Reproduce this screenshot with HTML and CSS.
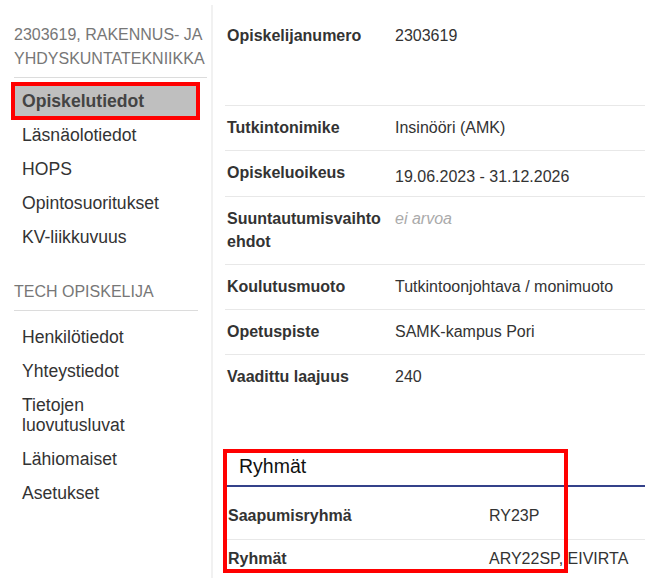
FILE: index.html
```html
<!DOCTYPE html>
<html lang="fi">
<head>
<meta charset="utf-8">
<title>Opiskelutiedot</title>
<link rel="stylesheet" href="styles.css">
</head>
<body>
<div class="layout">
  <aside class="sidebar">
    <div class="side-title">2303619, RAKENNUS- JA YHDYSKUNTATEKNIIKKA</div>
    <ul class="nav">
      <li><a class="nav-link active" href="#">Opiskelutiedot</a></li>
      <li><a class="nav-link" href="#">Läsnäolotiedot</a></li>
      <li><a class="nav-link" href="#">HOPS</a></li>
      <li><a class="nav-link" href="#">Opintosuoritukset</a></li>
      <li><a class="nav-link" href="#">KV-liikkuvuus</a></li>
    </ul>
    <div class="side-title second">TECH OPISKELIJA</div>
    <ul class="nav nav-second">
      <li><a class="nav-link" href="#">Henkilötiedot</a></li>
      <li><a class="nav-link" href="#">Yhteystiedot</a></li>
      <li><a class="nav-link" href="#">Tietojen luovutusluvat</a></li>
      <li><a class="nav-link" href="#">Lähiomaiset</a></li>
      <li><a class="nav-link" href="#">Asetukset</a></li>
    </ul>
  </aside>
  <main class="content">
    <div class="info">
      <div class="row first"><div class="label">Opiskelijanumero</div><div class="value">2303619</div></div>
      <div class="row"><div class="label">Tutkintonimike</div><div class="value">Insinööri (AMK)</div></div>
      <div class="row"><div class="label">Opiskeluoikeus</div><div class="value date">19.06.2023 - 31.12.2026</div></div>
      <div class="row"><div class="label">Suuntautumisvaihtoehdot</div><div class="value empty">ei arvoa</div></div>
      <div class="row"><div class="label">Koulutusmuoto</div><div class="value">Tutkintoonjohtava / monimuoto</div></div>
      <div class="row"><div class="label">Opetuspiste</div><div class="value">SAMK-kampus Pori</div></div>
      <div class="row"><div class="label">Vaadittu laajuus</div><div class="value">240</div></div>
    </div>
    <section class="groups">
      <h2 class="groups-title">Ryhmät</h2>
      <div class="grow first"><div class="glabel">Saapumisryhmä</div><div class="gvalue">RY23P</div></div>
      <div class="grow"><div class="glabel">Ryhmät</div><div class="gvalue">ARY22SP, EIVIRTA</div></div>
      <div class="annot"></div>
    </section>
  </main>
</div>
</body>
</html>
```
FILE: styles.css
```css
html, body {
  margin: 0;
  padding: 0;
  background: #fff;
  overflow: hidden;
}

body {
  font-family: "Liberation Sans", Arial, sans-serif;
  font-size: 16px;
  color: #333;
}

.layout {
  display: flex;
  margin-top: 5px;
  height: 573px;
}

.sidebar {
  width: 211px;
  flex: none;
  border-right: 2px solid #f1f1f1;
}

.side-title {
  margin: 18px 4px 0 14px;
  padding-bottom: 6px;
  border-bottom: 1px solid #dcdcdc;
  font-size: 16px;
  line-height: 24px;
  color: #777;
}

.side-title.second {
  margin: 26px 13px 0 14px;
  padding-bottom: 6px;
}

.nav {
  list-style: none;
  margin: 8px 0 0 15px;
  padding: 0;
  width: 181px;
}

.nav-second {
  margin-top: 9px;
}

.nav-link {
  display: block;
  padding: 7px;
  line-height: 20px;
  font-size: 17.6px;
  color: #333;
  text-decoration: none;
}

.nav-link.active {
  background: #bfbfbf;
  color: #444;
  font-weight: bold;
  padding: 5px 7px;
  margin: 2px 0;
  outline: 4px solid #ff0000;
}

.content {
  flex: 1;
  min-width: 0;
  padding: 9px 0 0 12px;
}

.row {
  display: flex;
  border-top: 1px solid #e8e8e8;
}

.row.first {
  border-top: none;
  height: 91px;
}

.label {
  flex: none;
  width: 158px;
  padding: 10px 10px 11.3px 2px;
  line-height: 23px;
  font-weight: bold;
  overflow-wrap: anywhere;
}

.value {
  padding: 10px 0 11.3px;
  line-height: 23px;
}

.value.date {
  padding-top: 14px;
  padding-bottom: 7px;
}

.value.empty {
  font-style: italic;
  color: #aaa;
}

.groups {
  position: relative;
  margin: 54px 0 0 2px;
}

.groups-title {
  margin: 0;
  padding: 0 0 7px 12px;
  font-size: 19.5px;
  font-weight: normal;
  line-height: 24px;
  color: #111;
  border-bottom: 2px solid #34418a;
}

.grow {
  display: flex;
  border-top: 1px solid #e8e8e8;
  padding: 8px 0;
  line-height: 22px;
}

.grow.first {
  border-top: none;
  padding: 18px 0 12px;
}

.glabel {
  flex: none;
  width: 261px;
  padding-left: 1px;
  font-weight: bold;
}

.gvalue {
  white-space: nowrap;
}

.annot {
  position: absolute;
  left: -4px;
  top: -5px;
  width: 345px;
  height: 124px;
  box-sizing: border-box;
  border: 4px solid #ff0000;
  pointer-events: none;
}
```
